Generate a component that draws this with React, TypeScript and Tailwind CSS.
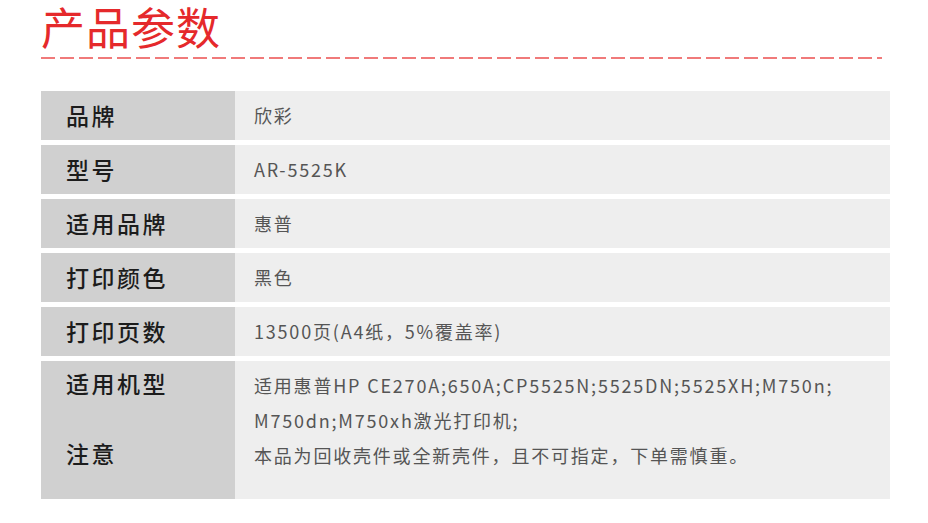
const font = "font-['Noto_Sans_CJK_SC','Noto_Sans',sans-serif]";

const rows = [
  { label: "品牌", value: "欣彩" },
  { label: "型号", value: "AR-5525K" },
  { label: "适用品牌", value: "惠普" },
  { label: "打印颜色", value: "黑色" },
  { label: "打印页数", value: "13500页(A4纸，5%覆盖率)" },
];

const Row = ({ label, value }: { label: string; value: string }) => (
  <div className="flex h-[49px]">
    <div className="flex w-[194px] items-center bg-[#d0d0d0] pl-[25px] text-[23px] font-medium tracking-[2.5px] text-[#1c1c1c]">
      {label}
    </div>
    <div className="flex flex-1 items-center bg-[#eeeeee] pl-[19px] text-[18px] tracking-[1.8px] text-[#555]">
      {value}
    </div>
  </div>
);

export default function App() {
  return (
    <div className={`h-[523px] w-[928px] bg-white ${font}`}>
      <div className="px-[41px]">
        <h1 className="h-[52px] text-[44px] leading-[52px] tracking-[1px] text-[#e5292b]">产品参数</h1>
        <div className="mt-[5px] mr-[5px] h-[2px] bg-[repeating-linear-gradient(to_right,#f07a7a_0_14px,transparent_14px_19px)]" />
      </div>
      <div className="mt-[32px] ml-[41px] flex w-[849px] flex-col gap-[5px]">
        {rows.map((r) => (
          <Row key={r.label} {...r} />
        ))}
        <div className="flex h-[138px]">
          <div className="flex w-[194px] flex-col bg-[#d0d0d0] pl-[25px] pt-[5px] text-[23px] font-medium leading-[35px] tracking-[2.5px] text-[#1c1c1c]">
            <div>适用机型</div>
            <div className="mt-[35px]">注意</div>
          </div>
          <div className="flex-1 bg-[#eeeeee] pl-[19px] pt-[7px] text-[18px] leading-[35px] tracking-[1.8px] text-[#555]">
            <div>适用惠普HP CE270A;650A;CP5525N;5525DN;5525XH;M750n;</div>
            <div>M750dn;M750xh激光打印机;</div>
            <div>本品为回收壳件或全新壳件，且不可指定，下单需慎重。</div>
          </div>
        </div>
      </div>
    </div>
  );
}
